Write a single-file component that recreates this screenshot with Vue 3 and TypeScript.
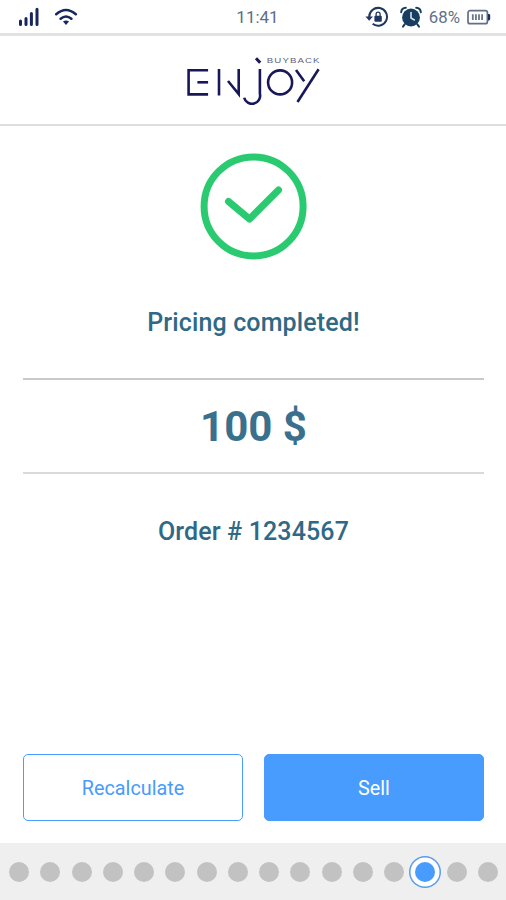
<script setup lang="ts">
import { ref } from 'vue'

const price = ref<number>(100)
const orderNumber = ref<string>('1234567')
const stepCount = 16
const currentStep = ref<number>(14)
</script>

<template>
  <div class="screen">
    <div class="status">
      <div class="status-side">
        <svg class="signal" width="22" height="20" viewBox="0 0 22 20">
          <g stroke="#17265f" stroke-width="3" stroke-linecap="round">
            <path d="M2.5 17.5V14M8 17.5V11.5M13.4 17.5V6.5M19 17.5V2.2" />
          </g>
        </svg>
        <svg class="wifi" width="24" height="20" viewBox="0 0 24 20">
          <g fill="none" stroke="#17265f" stroke-width="2.5" stroke-linecap="round">
            <path d="M2.2 7.2Q12 -1.2 21.8 7.2M6.6 11.8Q12 7.2 17.4 11.8" />
          </g>
          <path d="M9 14.6Q12 12.4 15 14.6L12 18Z" fill="#17265f" />
        </svg>
      </div>
      <span class="clock">11:41</span>
      <div class="status-side right">
        <svg class="lock" width="24" height="22" viewBox="0 0 24 22">
          <path d="M4.2 11A8.9 8.9 0 1 1 7.6 17.8" fill="none" stroke="#203760" stroke-width="2" />
          <path d="M0.4 10.4H8L4.2 14.8Z" fill="#203760" />
          <rect x="9.4" y="9.8" width="7.4" height="6" rx="1" fill="#203760" />
          <path d="M11.1 10V8.2a2 2 0 0 1 4 0V10" fill="none" stroke="#203760" stroke-width="1.3" />
        </svg>
        <svg class="alarm" width="22" height="22" viewBox="0 0 22 22">
          <circle cx="11" cy="11.5" r="8.9" fill="#173d60" />
          <path d="M1.2 6.2Q1.5 2 5.8 1.8M16.2 1.8Q20.5 2 20.8 6.2M4.8 18.2L3 20.6M17.2 18.2L19 20.6" fill="none" stroke="#173d60" stroke-width="2" stroke-linecap="round" />
          <path d="M11 6V12L14.8 14.2" fill="none" stroke="#d4e0e9" stroke-width="1.6" />
        </svg>
        <span class="percent">68%</span>
        <svg class="battery" width="24" height="16" viewBox="0 0 24 16">
          <rect x="1" y="1.7" width="19.4" height="13" rx="2" fill="none" stroke="#626f87" stroke-width="1.7" />
          <path d="M21 5h.8q1.4 0 1.4 1.4v3.6q0 1.4-1.4 1.4H21Z" fill="#17305f" />
          <path d="M5.8 5.2v5.8M8.9 5.2v5.8M12 5.2v5.8M15.1 5.2v5.8" stroke="#68768d" stroke-width="1.8" />
        </svg>
      </div>
    </div>

    <header class="brand">
      <svg width="140" height="50" viewBox="183.2 55 140 50" role="img" aria-label="Enjoy Buyback">
        <g fill="none" stroke="#18175a" stroke-width="2.6">
          <polyline points="208.3,70.2 188.8,70.2 188.8,94.4 208.3,94.4" />
          <line x1="197.6" y1="82.3" x2="208.3" y2="82.3" />
          <line x1="219.2" y1="69" x2="219.2" y2="95.5" />
          <polyline points="228.2,81 238.9,94 238.9,69" />
          <line x1="256.2" y1="58.2" x2="260.4" y2="62.8" stroke-width="3" />
          <path d="M260.1 69V93.8A8 8 0 0 1 244.4 97.7" />
          <circle cx="280.3" cy="82.4" r="12" />
          <line x1="318.8" y1="69.3" x2="297.7" y2="102" />
          <line x1="296.2" y1="70" x2="304.4" y2="81.2" />
        </g>
        <text class="tagline" x="267" y="63.4" textLength="53.8" lengthAdjust="spacingAndGlyphs">BUYBACK</text>
      </svg>
    </header>

    <main class="content">
      <svg class="check" width="108" height="108" viewBox="0 0 108 108">
        <g fill="none" stroke="#2acb70" stroke-width="7" stroke-linecap="round" stroke-linejoin="round">
          <circle cx="53.6" cy="53.4" r="49.5" />
          <path d="M28.5 48.5L49.5 66L78.5 37" />
        </g>
      </svg>
      <h1 class="title">Pricing completed!</h1>
      <div class="price">{{ price }} $</div>
      <p class="order">Order # {{ orderNumber }}</p>
    </main>

    <div class="actions">
      <button class="button outline" type="button">Recalculate</button>
      <button class="button solid" type="button">Sell</button>
    </div>

    <footer class="steps">
      <span v-for="step in stepCount" :key="step" class="step" :class="{ current: step === currentStep }"></span>
    </footer>
  </div>
</template>

<style>
body {
  margin: 0;
}
</style>

<style scoped>
.screen {
  box-sizing: border-box;
  display: flex;
  flex-direction: column;
  width: 100%;
  height: 900px;
  background: #fff;
  color: #2f6986;
  font-family: Roboto, "Liberation Sans", sans-serif;
  overflow: hidden;
}

.status {
  box-sizing: border-box;
  display: grid;
  grid-template-columns: 1fr auto 1fr;
  align-items: center;
  height: 36px;
  padding: 0 15px 0 18px;
  border-bottom: 3px solid #e2e2e2;
}

.status-side {
  display: flex;
  align-items: center;
}

.right {
  justify-content: flex-end;
}

.signal {
  margin-top: 1px;
}

.wifi {
  margin-left: 14px;
}

.clock {
  margin: 1px 0 0 6px;
  font-size: 17px;
  line-height: 20px;
  color: #5d6f83;
}

.alarm {
  margin-left: 11px;
}

.percent {
  margin: 1px 7px 0;
  font-size: 16.8px;
  line-height: 20px;
  color: #627087;
}

.brand {
  box-sizing: border-box;
  display: flex;
  justify-content: center;
  height: 90px;
  padding-top: 19px;
  border-bottom: 2px solid #dedede;
}

.tagline {
  font-family: "Liberation Sans", sans-serif;
  font-size: 7px;
  letter-spacing: 0.8px;
  fill: #62627c;
}

.content {
  display: flex;
  flex: 1;
  flex-direction: column;
  align-items: center;
  padding: 26px 22px 0 23px;
}

.check {
  flex: none;
  margin-top: 0.5px;
}

.title,
.order {
  margin: 0;
  font-size: 25px;
  font-weight: 500;
  line-height: 30px;
  letter-spacing: 0.13px;
}

.title {
  margin-top: 47.5px;
}

.price {
  box-sizing: border-box;
  width: 100%;
  height: 96px;
  margin-top: 40px;
  border-top: 2px solid #c9c9c9;
  border-bottom: 2px solid #dadada;
  color: #3b708c;
  font-size: 42px;
  font-weight: 700;
  line-height: 93px;
  text-align: center;
}

.order {
  margin-top: 43px;
}

.actions {
  display: grid;
  grid-template-columns: 1fr 1fr;
  gap: 21px;
  padding: 0 22px 22px 23px;
}

.button {
  box-sizing: border-box;
  height: 67px;
  padding: 2px 0 0;
  border: 1.5px solid #499bfc;
  border-radius: 5px;
  font-family: inherit;
  font-size: 19.8px;
  line-height: 24px;
}

.outline {
  background: #fff;
  color: #499bfc;
}

.solid {
  background: #479cfe;
  color: #fff;
}

.steps {
  box-sizing: border-box;
  display: flex;
  align-items: center;
  justify-content: space-between;
  height: 57px;
  padding: 0 8px 0 9px;
  background: #efefef;
}

.step {
  flex: none;
  width: 20px;
  height: 20px;
  border-radius: 50%;
  background: #c2c2c2;
}

.current {
  background: #479cfe;
  box-shadow: 0 0 0 4.5px #fff, 0 0 0 6px #599cf0;
}
</style>
